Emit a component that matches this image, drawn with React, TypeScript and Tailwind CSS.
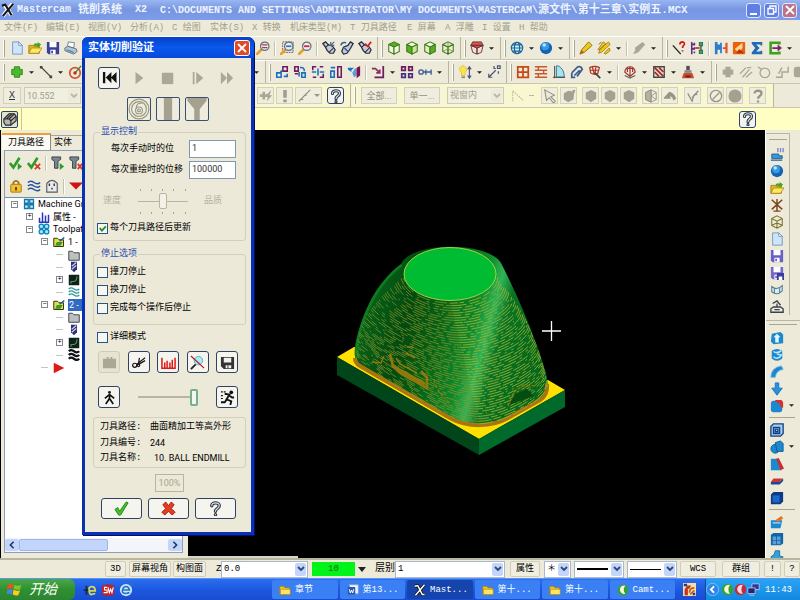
import type { ReactNode } from "react";
import clsx from "clsx";

// All glyphs are drawn on a 16x16 grid.
const cube = (top: string, left: string, right: string) => (
  <g stroke="#3c7a1c" strokeWidth="1.2" strokeLinejoin="round">
    <path d="M8 1 14 4 8 7 2 4Z" fill={top} />
    <path d="M2 4 8 7V15L2 12Z" fill={left} />
    <path d="M14 4 8 7V15L14 12Z" fill={right} />
  </g>
);

const magnifier = (inner: ReactNode) => (
  <g>
    <path d="M6 10 1 15" stroke="#e8a020" strokeWidth="3" strokeLinecap="round" />
    <circle cx="10" cy="6" r="4.8" fill="#e4eef6" stroke="#666c78" strokeWidth="1.4" />
    {inner}
  </g>
);

const flashlight = (mark: ReactNode) => (
  <g>
    <path d="M1 3 4 1 7 4 12 6 15 10 13 14 9 14 6 11 4 7Z" fill="#c6ccd6" stroke="#252b38" strokeWidth="1.4" />
    <path d="M4 7 8 4M8 13 13 8" stroke="#252b38" strokeWidth="1.2" />
    {mark}
  </g>
);

const disk = (color: string) => (
  <g>
    <path d="M1 1H15V15H3L1 13Z" fill={color} />
    <path d="M4 1H12V7H4ZM5 10H11V15H5Z" fill="#fff" />
    <path d="M6 11H8V14H6Z" fill={color} />
  </g>
);

const questionPaths = (
  <g fill="none" strokeLinecap="round">
    <path d="M4 5C4 1 12 1 12 5 12 8 8 8 8 11M8 14.5V14.6" stroke="#2c3442" strokeWidth="3.6" />
    <path d="M4 5C4 1 12 1 12 5 12 8 8 8 8 11M8 14.5V14.6" stroke="#dfe4ea" strokeWidth="1.2" />
  </g>
);

const folder = (
  <g>
    <path d="M1 3H6L8 5H14V14H1Z" fill="#f4c428" stroke="#9c7a10" />
    <path d="M2 7H15V14H2Z" fill="#fde468" stroke="#9c7a10" strokeWidth=".7" />
  </g>
);

const waves = (color: string) => (
  <path d="M1 4Q4 1 8 4T15 4M1 8Q4 5 8 8T15 8M1 12Q4 9 8 12T15 12" fill="none" stroke={color} strokeWidth="1.7" />
);

const icons: Record<string, ReactNode> = {
  new: (
    <g>
      <path d="M3 1H10L14 5V15H3Z" fill="#cfe4fa" stroke="#6a94c4" />
      <path d="M10 1V5H14Z" fill="#fff" stroke="#6a94c4" />
    </g>
  ),
  open: (
    <g>
      <path d="M1 5H6L7 6H13V14H1Z" fill="#e8b820" stroke="#a27a10" />
      <path d="M4 8H16L12 14H1Z" fill="#fde860" stroke="#a27a10" strokeWidth=".8" />
      <path d="M6 6Q7 1 11 3V1L15 4 11 8V6Q8 5 6 6Z" fill="#48a420" />
    </g>
  ),
  save: disk("#3b3f96"),
  savePurple: disk("#6a60c8"),
  saveAs: (
    <g>
      <g>{disk("#7468c8")}</g>
      <path d="M8 8H16V16H8Z" fill="#3c3ca0" />
      <path d="M10 12H14V16H10Z" fill="#fff" />
    </g>
  ),
  print: (
    <g>
      <path d="M5 1 12 2 11 8 4 6Z" fill="#fff" stroke="#68788a" />
      <path d="M1 8 4 6 14 9 15 12 11 15 1 11Z" fill="#b8c4d0" stroke="#5a6878" />
      <path d="M3 10 11 13" stroke="#3a8ac0" strokeWidth="1.4" />
    </g>
  ),
  plus: <path d="M5 2H11V5H14V11H11V14H5V11H2V5H5Z" fill="#4cb82c" stroke="#2c8018" />,
  line: (
    <g>
      <path d="M2 2 14 14" stroke="#444" strokeWidth="1.3" />
      <path d="M1 1H4V4H1ZM12 12H15V15H12Z" fill="#444" />
    </g>
  ),
  circleRed: (
    <g>
      <circle cx="8" cy="9" r="6" fill="none" stroke="#d05830" strokeWidth="2" />
      <path d="M8 9 15 1" stroke="#488030" strokeWidth="1.6" />
      <circle cx="8" cy="9" r="2" fill="#c03020" />
    </g>
  ),
  zoomRed: magnifier(<path d="M7 4.500H13M7 7.500H13" stroke="#b03838" strokeWidth="1.5" />),
  zoomWin: (
    <g>
      <path d="M3 1H15V13H3Z" fill="none" stroke="#555" strokeDasharray="2 1" />
      {magnifier(<path d="M7 6H13" stroke="#3a78b8" strokeWidth="2" />)}
    </g>
  ),
  zoomOut: magnifier(<path d="M7 6H13" stroke="#d02020" strokeWidth="2" />),
  flash1: flashlight(<path d="M10 1V5H14M10 5 14 1" fill="none" stroke="#48698e" strokeWidth="1.4" />),
  flash2: (
    <g>
      <path d="M15 3 12 1 9 5 4 7 2 12 4 15 8 14 11 10Z" fill="#c6ccd6" stroke="#252b38" strokeWidth="1.4" />
      <path d="M1 5Q2 1 7 2M5 8 9 12" fill="none" stroke="#28649c" strokeWidth="1.8" />
    </g>
  ),
  flash3: flashlight(<path d="M8 3 11 6 15 1" fill="none" stroke="#d02028" strokeWidth="2" />),
  cubeTop: cube("#58b020", "#f4f8e0", "#f4f8e0"),
  cubeFront: cube("#f4f8e0", "#58b020", "#c8e890"),
  cubeRight: cube("#f4f8e0", "#e0f0c0", "#58b020"),
  cubeWire: (
    <g>
      {cube("none", "none", "none")}
      <path d="M2 12 8 9 14 12M8 1V9" fill="none" stroke="#789838" />
    </g>
  ),
  cubeOlive: (
    <g fill="none" stroke="#77742c" strokeWidth="1.2">
      <path d="M8 1 14 4V12L8 15 2 12V4ZM2 4 8 7 14 4M8 7V15M2 12 8 9 14 12" />
    </g>
  ),
  cubeRed: (
    <g stroke="#5c3030">
      <path d="M3 1H13L15 5H1Z" fill="#e05050" />
      <path d="M1 5 8 8V15L3 13ZM15 5 8 8V15L13 13Z" fill="#f4dcd4" />
      <path d="M1 5H15L8 8Z" fill="#e05050" />
    </g>
  ),
  globe: (
    <g fill="none" stroke="#1e6696" strokeWidth="1.3">
      <circle cx="8" cy="8" r="6.500" fill="#d4ecf4" />
      <ellipse cx="8" cy="8" rx="3" ry="6.500" />
      <path d="M1.500 8H14.500M3 4.500H13M3 11.500H13" />
    </g>
  ),
  sphere: (
    <g>
      <circle cx="8" cy="8" r="7" fill="#1464b4" />
      <circle cx="7" cy="6" r="4.500" fill="#3a98e0" />
      <circle cx="6" cy="4.500" r="2" fill="#b8e4fc" />
    </g>
  ),
  crayon: (
    <g>
      <path d="M11 1 15 5 6 13 1 15 3 10Z" fill="#f0c81c" stroke="#8c6c10" />
      <path d="M3 10 6 13 1 15Z" fill="#c06020" />
    </g>
  ),
  crayons: (
    <g stroke="#8c6c10" strokeWidth=".8" fill="#f0c81c">
      <path d="M7 1 10 3 4 9 1 10ZM13 1 15 4 5 13 2 14 3 10ZM14 8 15 11 10 15 8 14Z" />
      <path d="M2 4 5 1" stroke="#333" />
    </g>
  ),
  eraser: <path d="M12 1 15 4 7 13 1 15 4 10 3 8Z" fill="#a8a694" />,
  lineQ: (
    <g fill="none">
      <path d="M1 5 10 15" stroke="#222" strokeWidth="1.600" />
      <path d="M9 4Q9 1 12 1 15 2 14 4 12 6 12 8M12 10.500V12" stroke="#d01818" strokeWidth="2" />
    </g>
  ),
  network: (
    <g fill="none" strokeWidth="1.800">
      <path d="M2 1V15M5 2V5M5 7V10M5 12V14M2 4H5M2 9H5" stroke="#5a3080" />
      <path d="M11 2H14V5H11ZM11 11H14V14H11ZM12.500 5V11" stroke="#287858" />
      <path d="M6 8H11" stroke="#c02020" />
    </g>
  ),
  hsplit: (
    <g>
      <path d="M1 1H4V4H7V2H9V14H7V10H4V15H1Z" fill="#2c7cd0" />
      <path d="M10 7H13V2H15.500V14H13V9H10Z" fill="#e05030" />
    </g>
  ),
  orange: (
    <g>
      <rect x="1" y="1" width="14" height="14" rx="1" fill="#e86010" />
      <path d="M3 9 12 2V8L8 13Z" fill="#fcd890" />
      <path d="M8 9 14 14H5Z" fill="#c02c08" />
    </g>
  ),
  sigma: <path d="M2 1H14V5H12V4H7L11 8 7 12H12V11H14V15H2V13L6 8 2 3Z" fill="#2068b8" />,
  greenBox: (
    <g>
      <path d="M13 4V2H3V14H13V12" fill="none" stroke="#3ca020" strokeWidth="3" />
      <path d="M5 7H11V4L16 8 11 12V9H5Z" fill="#7c2470" />
    </g>
  ),
  xf1: (
    <g fill="none" strokeWidth="1.800">
      <path d="M9 2H14V7H9Z" stroke="#701c60" />
      <path d="M2 9H7V14H2ZM10 13H14V10" stroke="#1c70c0" />
      <path d="M6 8 9 6" stroke="#1c70c0" />
    </g>
  ),
  xf2: (
    <g fill="none" strokeWidth="1.800">
      <path d="M2 2H6V7H2ZM2 10H6" stroke="#701c60" />
      <path d="M10 9H14V14H10ZM8 3Q13 2 13 7M7 8V13" stroke="#1c70c0" />
    </g>
  ),
  xf3: (
    <g fill="none" strokeWidth="1.800">
      <path d="M6 2H2V6M2 14H6M10 2H14M14 10V14H10" stroke="#701c60" />
      <path d="M8 4V12M1 8H6M10 8H15" stroke="#1c70c0" />
    </g>
  ),
  xf4: (
    <g fill="none" strokeWidth="1.800">
      <path d="M10 2H14V14H10Z" stroke="#701c60" />
      <path d="M2 7H6V14H2ZM2 3H7" stroke="#1c70c0" />
    </g>
  ),
  xf5: (
    <g>
      <path d="M1 3H8L5 6V8L1 5Z" fill="#1c70c0" />
      <path d="M6 9 9 4H11V12L8 14Z" fill="#5c9cd8" />
      <path d="M11 3 15 1V12L11 15Z" fill="#7c1450" />
    </g>
  ),
  xf6: (
    <g fill="none" strokeWidth="2">
      <path d="M14 1V14H4" stroke="#701c60" />
      <path d="M1 4H5L10 9M10 5V9H6" stroke="#8c2c60" />
    </g>
  ),
  xf7: (
    <g fill="none" strokeWidth="2">
      <path d="M2 2H6V6H2ZM10 2H14V6H10Z" stroke="#701c60" />
      <path d="M2 10H6V14H2ZM10 10H14V14H10Z" stroke="#4c3080" />
    </g>
  ),
  xf8: (
    <g fill="none" stroke="#385c98" strokeWidth="1.500">
      <circle cx="3.500" cy="8" r="2.500" />
      <path d="M6 8H15M9 5V11M15 5V11" />
    </g>
  ),
  bulb: (
    <g>
      <path d="M5 1Q1 2 2 6L4 9V12H8V9Q11 6 9 3 7 0 5 1Z" fill="#fce448" stroke="#e0c040" />
      <path d="M4 13H8V15H4Z" fill="#888" />
      <path d="M13 3V14M11 5 13 2 15 5M11 12 13 15 15 12" fill="none" stroke="#505078" strokeWidth="1.300" />
    </g>
  ),
  dimension: (
    <g fill="none" stroke="#4c5478" strokeWidth="1.400">
      <path d="M2 14 10 6M2 10V14H6" />
      <path d="M8 1V4H10M12 1H15V4H12ZM13 7V10" />
    </g>
  ),
  grid: <path d="M2 2H14V14H2ZM8 2V14M2 8H14" fill="none" stroke="#c84818" strokeWidth="2" />,
  bars: <path d="M1 2H15M1 6H15M1 10H15M1 14H15M5 2V6M11 6V10M5 10V14" fill="none" stroke="#c85830" strokeWidth="1.600" />,
  sail: (
    <g>
      <path d="M5 1H7Q14 4 14 14H5Z" fill="#a8e4ec" stroke="#286c98" />
      <path d="M3 1V15M1 14H15" stroke="#333" />
    </g>
  ),
  clip: <path d="M2 9 9 2Q13 1 14 5L8 13M5 12 11 6M2 9V14H6" fill="none" stroke="#3c5c94" strokeWidth="2" />,
  redMesh: (
    <g fill="none" stroke="#b03428" strokeWidth="1.400">
      <path d="M2 3Q8 0 13 3L11 10Q7 12 3 9ZM5 2 7 10M9 2 8 10M2 6H12" />
      <path d="M8 9 14 15" stroke="#444" strokeWidth="2" />
    </g>
  ),
  dome: (
    <g fill="none" stroke="#a03830" strokeWidth="1.400">
      <path d="M2 8Q3 2 8 2T14 8L8 13ZM5 8V4H11V8M8 2V13" />
      <path d="M2 12 8 15 14 12" stroke="#666" />
    </g>
  ),
  hatch: (
    <g>
      <path d="M2 2H14V14H2Z" fill="#efe0d8" stroke="#444" strokeWidth="1.500" />
      <path d="M3 3 13 13M3 8 8 13M8 3 13 8" stroke="#a02820" strokeWidth="2" />
    </g>
  ),
  tool: (
    <g>
      <path d="M6 1H10V6H6Z" fill="#505050" />
      <path d="M4 6H12V9H4Z" fill="#888" />
      <path d="M3 9H13L15 15H1Z" fill="#d84828" />
      <path d="M5 12H11V14H5Z" fill="#333" />
    </g>
  ),
  gPlus: <path d="M5 2H11V5H14V11H11V14H5V11H2V5H5Z" fill="#aaa894" />,
  gLines: <path d="M1 10 8 3M4 14 12 5M8 14 15 8M9 3H14" stroke="#aaa894" strokeWidth="1.500" fill="none" />,
  gCircle: (
    <g fill="none" stroke="#aaa894" strokeWidth="1.500">
      <circle cx="9" cy="9" r="5.500" />
      <path d="M1 2 5 5" />
    </g>
  ),
  gReturn: <path d="M15 2V8H8V14H1M4 10 8 3" fill="none" stroke="#aaa894" strokeWidth="1.700" />,
  gDot: <rect x="1" y="2" width="13" height="12" rx="3" fill="#aaa894" />,
  gBolt: <path d="M1 6H4V3H7V6H9L14 1 12 7H15L9 14 10 9H7V12H4V9H1Z" fill="#aaa894" />,
  gBang: <path d="M6 1H10V10H6ZM6 12H10V15H6Z" fill="#a09e8a" />,
  gSlash: <path d="M1 14 14 1M3 12H6M9 5V8" fill="none" stroke="#918f7d" strokeWidth="1.300" />,
  gAngle: <path d="M2 14V2L14 13" fill="none" stroke="#bcb89c" strokeWidth="1.200" strokeDasharray="2 1" />,
  cursor: <path d="M2 1 13 7 9 9 14 14 12 16 7 10 4 13Z" fill="#eceadb" stroke="#8f8d7b" strokeWidth="1.200" />,
  gHex: <path d="M8 1 14 4V11L8 15 2 11V4Z" fill="#a4a28e" />,
  gHexDot: (
    <g fill="#a4a28e">
      <path d="M7 2 14 3 13 12 7 15 2 12V5Z" />
      <path d="M12 1H15V4H12Z" />
    </g>
  ),
  gHalf: (
    <g fill="none" stroke="#918f7d">
      <path d="M8 1 14 4V12L8 15 2 12V4Z" />
      <path d="M8 1V15M8 8 14 4M8 8 14 12M2 4 8 8 2 12" />
      <path d="M8 1 2 4V12L8 15Z" fill="#b5b3a0" />
    </g>
  ),
  gArc: <path d="M1 10 7 3Q13 4 15 11L12 13Q11 9 8 8L9 11H1Z" fill="#98967f" />,
  gV: <path d="M2 5 7 14 9 7 13 6M7 10 14 2" fill="none" stroke="#8f8d7b" strokeWidth="1.400" />,
  gNo: (
    <g fill="none" stroke="#98967f" strokeWidth="1.500">
      <circle cx="8" cy="8" r="6.500" />
      <path d="M4 12 12 4" />
    </g>
  ),
  gBall: <circle cx="8" cy="8" r="7.500" fill="#a4a28e" />,
  gQ: <path d="M4 5C4 1 12 1 12 5 12 8 8 8 8 11M8 13V15.500" fill="none" stroke="#98967f" strokeWidth="2.600" />,
  question: questionPaths,
  solidBox: (
    <g fill="none" stroke="#2a2a2a" strokeWidth="1.300" strokeLinejoin="round">
      <path d="M1 8 7 2H13L15 5V10L9 15H3L1 12Z" fill="#b8b8b0" />
      <path d="M1 8H7L9 10V15M7 8 13 2M9 10 15 5M4 8 10 2" />
    </g>
  ),
  checkGo: (
    <g>
      <path d="M1 8 5 13 12 2" fill="none" stroke="#2e9c28" strokeWidth="3" />
      <path d="M10 8 15 12 10 16Z" fill="#2e9c28" />
    </g>
  ),
  checkX: (
    <g fill="none">
      <path d="M1 8 5 13 12 2" stroke="#2e9c28" strokeWidth="3" />
      <path d="M9 9 15 15M15 9 9 15" stroke="#d83820" strokeWidth="2" />
    </g>
  ),
  toolGo: (
    <g>
      <path d="M1 1H11V4L8 6V14H4V6L1 4Z" fill="#78868e" stroke="#333c44" />
      <path d="M10 8 15 12 10 16Z" fill="#2e9c28" />
    </g>
  ),
  toolX: (
    <g>
      <path d="M1 1H11V4L8 6V14H4V6L1 4Z" fill="#78868e" stroke="#333c44" />
      <path d="M10 9 15 15M15 9 10 15" stroke="#d83820" strokeWidth="2" />
    </g>
  ),
  lock: (
    <g>
      <path d="M5 7V4Q8 0 11 4V7" fill="none" stroke="#9c7410" strokeWidth="2" />
      <rect x="2" y="6" width="12" height="9" rx="1" fill="#f4c030" stroke="#9c7410" />
      <path d="M7 9H9V13H7Z" fill="#5c3c08" />
    </g>
  ),
  waves: waves("#2450a0"),
  wavesTeal: waves("#289898"),
  wavesBlack: (
    <path d="M1 3Q4 0 8 3T15 3M1 8Q4 5 8 8T15 8M1 13Q4 10 8 13T15 13" fill="none" stroke="#101418" strokeWidth="3" />
  ),
  ghost: (
    <g>
      <path d="M2 15V5Q8-2 14 5V15Z" fill="#e8eaec" stroke="#555c68" strokeWidth="1.300" />
      <path d="M5 5V8M10.500 5V8M8 10V12" stroke="#333" strokeWidth="1.600" />
    </g>
  ),
  redDown: <path d="M0 4H16L8 12Z" fill="#cc1414" />,
  redRight: <path d="M1 1 15 8 1 15Z" fill="#e01818" />,
  machine: <path d="M2 2H7V7H2ZM9 2H14V7H9ZM2 9H7V14H2ZM9 9H14V14H9Z" fill="#c0f0fc" stroke="#1874a8" strokeWidth="1.700" />,
  props: <path d="M2 14V9M6 14V2M10 14V6M14 14V5M1 15H15" stroke="#2838b8" strokeWidth="2" />,
  toolpaths: (
    <g fill="#9ce8f8" stroke="#1080b8" strokeWidth="1.600">
      <circle cx="4.500" cy="4.500" r="3" />
      <circle cx="11.500" cy="4.500" r="3" />
      <circle cx="4.500" cy="11.500" r="3" />
      <circle cx="11.500" cy="11.500" r="3" />
    </g>
  ),
  folderTool: (
    <g>
      <path d="M1 3H6L8 5H14V14H1Z" fill="#e4dc48" stroke="#333408" strokeWidth="1.300" />
      <path d="M5 8H13L10 13H3Z" fill="#3a9830" />
      <path d="M9 7 15 2" stroke="#205890" strokeWidth="2" />
    </g>
  ),
  folderGray: <path d="M1 3H6L8 5H15V15H1Z" fill="#bcc0c0" stroke="#44484c" strokeWidth="1.300" />,
  endmill: (
    <g>
      <path d="M4 1H12V11L8 15 4 11Z" fill="#303078" />
      <path d="M5 7 11 2M5 11 11 6" stroke="#d0d0ec" strokeWidth="1.500" />
    </g>
  ),
  geometry: (
    <g>
      <rect x="1" y="1" width="14" height="14" fill="#10201c" />
      <path d="M4 13V10H8Q12 9 12 3" fill="none" stroke="#4c9c40" strokeWidth="1.500" />
    </g>
  ),
  planes: (
    <g>
      <path d="M2 8H10V10H14V13H2Z" fill="#3c98dc" stroke="#205c90" />
      <path d="M9 1V6M12 1V6M15 1V6" stroke="#8088c8" strokeWidth="1.600" />
      <path d="M1 15H14" stroke="#205c90" strokeWidth="1.400" />
    </g>
  ),
  axes: <path d="M8 1V15M2 2 14 13M14 2 2 13M4 15H12" fill="none" stroke="#7c4420" strokeWidth="1.700" />,
  surf: <path d="M2 4Q8 9 14 3V9Q8 15 2 10ZM5 6V11M11 6V11" fill="#d4ecf4" stroke="#587890" strokeWidth="1.200" />,
  mill: (
    <g fill="none" stroke="#38404c" strokeWidth="1.500">
      <path d="M1 14V10L4 8H12L15 10V14ZM8 8V4M5 11H11M3 4 8 1 12 6" />
    </g>
  ),
  extrude: (
    <g>
      <path d="M2 3 12 1 15 4V14L4 15 1 12Z" fill="#1c88d0" />
      <path d="M8 3 12 7H10V13H6V7H4Z" fill="#e4f8ff" />
    </g>
  ),
  revolve: (
    <g>
      <path d="M2 3Q8-1 14 3V12Q8 17 2 12Z" fill="#1c88d0" />
      <path d="M4 4Q8 7 13 3M4 10Q9 14 13 8L8 7" fill="none" stroke="#bce8fc" strokeWidth="1.700" />
    </g>
  ),
  sweep: <path d="M1 14Q1 3 13 1L15 5Q7 6 6 14Z" fill="#1c88d0" stroke="#64b8ec" />,
  loft: <path d="M6 1H10V7H14L8 15 2 7H6Z" fill="#2890dc" stroke="#1474b8" />,
  fillet: (
    <g>
      <rect x="1" y="2" width="13" height="13" rx="3" fill="#1c88d0" />
      <path d="M6 1H12Q15 1 15 5V10L12 9Q12 4 6 3Z" fill="#d83030" />
    </g>
  ),
  shell: (
    <g fill="none" stroke="#143c80" strokeWidth="1.500">
      <path d="M1 4 4 1H15V12L12 15H1Z" fill="#a0d4f4" />
      <path d="M4 5H11V12H4ZM6 7H9V10H6Z" />
    </g>
  ),
  bool: (
    <g fill="#1c88d0" stroke="#0c5898">
      <circle cx="6" cy="10" r="5" />
      <path d="M6 3 12 1 15 4V13H8Z" />
    </g>
  ),
  draft: (
    <g>
      <path d="M1 2H8L13 15H1Z" fill="#1c88d0" />
      <path d="M7 2 10 1 16 13 12 15Z" fill="#c83030" />
    </g>
  ),
  trimSolid: (
    <g>
      <path d="M4 5H15L11 9H1Z" fill="#c83838" />
      <path d="M1 9H11L15 5V8L11 12H1Z" fill="#184c90" />
    </g>
  ),
  block: (
    <g>
      <path d="M1 4 4 1H15V12L12 15H1Z" fill="#0c3c84" />
      <path d="M3 5H11V13H3Z" fill="#1c68c8" />
    </g>
  ),
  openSolid: (
    <g>
      <path d="M1 6H14L12 15H1Z" fill="#1c88d0" />
      <path d="M6 6 13 1 15 4 9 8Z" fill="#e87020" />
      <path d="M3 9H12" stroke="#a0dcf8" strokeWidth="1.500" />
    </g>
  ),
  grid3d: (
    <g>
      <path d="M1 3 4 1H15V13L12 15H1Z" fill="#1464a8" />
      <path d="M3 5H7V9H3ZM8 5H12V9H8ZM3 10H7V14H3ZM8 10H12V14H8Z" fill="#58a0d8" />
    </g>
  ),
  arrowSolid: <path d="M1 9 5 6 6 2H11V8L15 9 11 14H5Z" fill="#30a0e0" stroke="#206898" />,
  xlogo: (
    <g fill="none">
      <path d="M4 2 12 14M13 1 2 15" stroke="#fff" strokeWidth="4.500" />
      <path d="M1 3 5 2 12 14M14 1 2 15" stroke="#151515" strokeWidth="2.400" />
    </g>
  ),
  xlogoWhite: (
    <g fill="none">
      <path d="M1 3 5 2 11 14H14M14 1 2 15" stroke="#111" strokeWidth="4" />
      <path d="M1 3 5 2 11 14H14M14 1 2 15" stroke="#fff" strokeWidth="2" />
    </g>
  ),
  folder,
  word: (
    <g>
      <path d="M3 1H15V13H6Z" fill="#f0f4fc" stroke="#88a0c8" />
      <rect x="1" y="4" width="10" height="10" fill="#2858b0" />
      <path d="M3 7 4.500 12 6 8 7.500 12 9 7" fill="none" stroke="#fff" strokeWidth="1.300" />
    </g>
  ),
  camtasia: (
    <g>
      <circle cx="8" cy="8" r="7" fill="#38a030" />
      <path d="M11 2Q3 2 4 9 6 14 11 13 7 8 11 2Z" fill="#f8fcd8" />
    </g>
  ),
  trayRed: (
    <g>
      <circle cx="8" cy="8" r="7" fill="#c82838" />
      <path d="M11 2Q3 2 4 9 6 14 11 13 7 8 11 2Z" fill="#fcdce0" />
    </g>
  ),
  monitors: (
    <g stroke="#c0ccf4">
      <path d="M6 1H15V8H6Z" fill="#303890" />
      <path d="M1 6H10V13H1Z" fill="#20286c" />
      <path d="M3 15H9" />
    </g>
  ),
  palette: (
    <g>
      <rect width="16" height="16" fill="#f0e0a8" />
      <path d="M2 15V8L5 3H10L8 7H6V15Z" fill="#c83020" />
      <path d="M1 1H5V4H1ZM12 12H15V15H12Z" fill="#20389c" />
      <path d="M8 12Q8 6 14 6M9 14 14 9" fill="none" stroke="#c85820" strokeWidth="2" />
    </g>
  ),
  ieDark: (
    <g fill="none" stroke="#d8d850" strokeWidth="2">
      <path d="M7 9H14Q14 4 10 4T7 9 10 13L14 12" />
      <path d="M1 8H6M4 3V13" stroke="#182838" />
    </g>
  ),
  solidworks: (
    <g>
      <path d="M1 3 8 1 15 3V13L8 15 1 13Z" fill="#c02028" />
      <path d="M7 5H4V8H7V11H3M8 5 9.500 11 11 7 12.500 11 14 5" fill="none" stroke="#fff" strokeWidth="1.300" />
    </g>
  ),
  ie: (
    <g fill="none">
      <circle cx="8" cy="8" r="7" fill="#c8e8fc" />
      <path d="M5 8H12Q11 4 8 4T4 8 8 12L12 11M12 2 15 1 14 4" stroke="#2870c0" strokeWidth="1.800" />
    </g>
  ),
  chevronLeft: (
    <g fill="none">
      <circle cx="8" cy="8" r="7.500" fill="#2c84e8" stroke="#90c8fc" />
      <path d="M10 4 6 8 10 12" stroke="#fff" strokeWidth="2.200" />
    </g>
  ),
  rewind: <path d="M1 2H3.500V14H1ZM4 8 10 2V14ZM9.500 8 15.500 2V14Z" fill="#111" />,
  play: <path d="M4 1 13 8 4 15Z" fill="#aba995" />,
  stop: <path d="M1 2H14V15H1Z" fill="#aba995" />,
  step: <path d="M2 1H4V15H2ZM6 1 14 8 6 15Z" fill="#aba995" />,
  forward: <path d="M1 1 8 8 1 15ZM8 1 15 8 8 15Z" fill="#aba995" />,
  target: (
    <g fill="none" stroke="#98967f" strokeWidth=".8">
      <circle cx="8" cy="8" r="7.200" />
      <circle cx="8" cy="8" r="5.400" />
      <circle cx="8" cy="9" r="2.500" />
      <circle cx="8" cy="9" r="1" />
      <path d="M6 8Q6 3 10 4" />
    </g>
  ),
  stockBar: <path d="M5 0H11V16H5Z" fill="#a4a28e" />,
  funnel: <path d="M1 0H15V2L10 8V16H6V8L1 2Z" fill="#a4a28e" />,
  camera: <path d="M1 4H5V2H7V4H9V2H11V4H15V14H1Z" fill="#aaa894" />,
  caliper: (
    <g fill="none" stroke="#161616" strokeWidth="1.300">
      <path d="M15 3 6 10M15 6 8 10M9 3 8 9" />
      <circle cx="4" cy="11" r="2.200" />
      <circle cx="8" cy="11" r="1.300" />
    </g>
  ),
  chart: <path d="M1 3V14H15V3M4 14V8M6.500 14V6M9.500 14V8M12 14V5" fill="none" stroke="#e01818" strokeWidth="1.600" />,
  noZoom: (
    <g fill="none">
      <circle cx="9" cy="6" r="4.500" fill="#a8eef0" stroke="#58b0b4" />
      <path d="M6 10 1 15" stroke="#222" strokeWidth="2" />
      <path d="M1 1 15 14" stroke="#c01830" strokeWidth="1.400" />
    </g>
  ),
  floppy: (
    <g>
      <path d="M1 2H15V15H4L1 12Z" fill="#333" />
      <path d="M4 3H12V8H4ZM6 11H12V14H6Z" fill="#eef0f2" />
      <path d="M8 11H9V14H8Z" fill="#333" />
    </g>
  ),
  walk: (
    <g fill="none" stroke="#111" strokeWidth="1.800">
      <circle cx="8" cy="2.500" r="1.500" fill="#111" stroke="none" />
      <path d="M8 4V9L4 15M8 9 12 15M3 9 8 5 13 9" />
    </g>
  ),
  run: (
    <g fill="none" stroke="#111" strokeWidth="2">
      <circle cx="12" cy="2.500" r="2" fill="#111" stroke="none" />
      <path d="M5 4 10 5 7 10 12 12 11 16M8 9 5 13H1M10 6 13 8H15" />
      <path d="M1 2H6M1 6H4M1 9H4" strokeWidth="1.200" strokeDasharray="2 1" />
    </g>
  ),
  ok: <path d="M1 9 4 7 6 11 13 1 15 2 7 15H5Z" fill="#40c828" stroke="#208010" />,
  cancel: <path d="M2 4 5 1 8 5 11 1 14 4 11 8 15 12 12 15 8 11 4 15 1 12 5 8Z" fill="#e83c20" stroke="#a01c0c" />,
};

function Icon({ name, className = "size-[14px]" }: { name: string; className?: string }) {
  return (
    <svg viewBox="0 0 16 16" className={clsx("shrink-0", className)} aria-hidden="true">
      {icons[name]}
    </svg>
  );
}

// "v" is a drop-down arrow, "|" a separator, "][" the edge between two docked bars.
function Strip({ items }: { items: string }) {
  return (
    <div className="flex h-full items-center">
      {items.split(" ").map((item, i) => {
        if (item === "v")
          return (
            <button key={i} aria-label="更多" className="flex h-4 w-[11px] shrink-0 items-center justify-center">
              <svg viewBox="0 0 6 3" className="h-[3px] w-[5px]">
                <path d="M0 0H6L3 3Z" fill="#222" />
              </svg>
            </button>
          );
        if (item === "|") return <i key={i} className="mx-[2px] h-[15px] w-[2px] shrink-0 border-l border-[#c5c2ae] bg-white" />;
        if (item === "][")
          return (
            <i key={i} className="flex h-full w-[11px] shrink-0 items-center gap-[3px] pl-[3px]">
              <i className="h-full w-px bg-[#b9b69f]" />
              <i className="h-[17px] w-[2px] border-r border-[#a9a68f] bg-white" />
            </i>
          );
        return (
          <button key={i} aria-label={item} className="flex h-[18px] w-[18px] shrink-0 items-center justify-center">
            <Icon name={item} />
          </button>
        );
      })}
    </div>
  );
}

function Toolbar({ left, right, shift }: { left: string; right: string; shift?: boolean }) {
  return (
    <div className="flex h-6 shrink-0 items-center overflow-hidden border-b border-[#c9c6b2] border-t border-t-white bg-[#edead9]">
      <i className="ml-[3px] mr-[3px] h-[17px] w-[2px] shrink-0 border-r border-[#a9a68f] bg-white" />
      <div className={clsx("h-full shrink-0", shift ? "w-[243px]" : "w-[246px]")}>
        <Strip items={left} />
      </div>
      <Strip items={right} />
    </div>
  );
}

const menus = [
  ["文件(F)", "w-[42px]"],
  ["编辑(E)", "w-[42px]"],
  ["视图(V)", "w-[42px]"],
  ["分析(A)", "w-[42px]"],
  ["C 绘图", "w-[38px]"],
  ["实体(S)", "w-[42px]"],
  ["X 转换", "w-[38px]"],
  ["机床类型(M)", "w-[60px]"],
  ["T 刀具路径", "w-[57px]"],
  ["E 屏幕", "w-[38px]"],
  ["A 浮雕", "w-[37px]"],
  ["I 设置", "w-[37px]"],
  ["H 帮助", "w-[38px]"],
];

function TitleBar() {
  const button = "flex size-[15px] items-center justify-center rounded-[3px] border border-[#dfe8ff]";
  return (
    <header className="flex h-5 shrink-0 items-center bg-gradient-to-b from-[#98b6f2] via-[#7795e0] to-[#7d9ded] pl-[1px] pr-[3px] text-[10px] font-bold text-[#eef4ff]">
      <Icon name="xlogo" />
      <h1 className="ml-[2px] flex flex-1 items-center gap-[7px] whitespace-pre">
        <span>Mastercam</span>
        <span className="text-[11px]">铣削系统</span>
        <span className="ml-[6px]">X2</span>
        <span className="ml-[6px]">
          C:\DOCUMENTS AND SETTINGS\ADMINISTRATOR\MY DOCUMENTS\MASTERCAM\<span className="text-[11px]">源文件\第十三章\实例五.MCX</span>
        </span>
      </h1>
      <div className="flex gap-[3px]">
        <button aria-label="最小化" className={clsx(button, "bg-[#5f7fe4]")}>
          <i className="mt-[7px] h-[2px] w-[7px] bg-white" />
        </button>
        <button aria-label="还原" className={clsx(button, "bg-[#5f7fe4]")}>
          <svg viewBox="0 0 10 10" className="size-[10px]">
            <path d="M3 3V1H9V7H7M1 3.500H6.500V9H1Z" fill="none" stroke="#fff" strokeWidth="1.400" />
          </svg>
        </button>
        <button aria-label="关闭" className={clsx(button, "bg-[#bd7488]")}>
          <svg viewBox="0 0 10 10" className="size-[10px]">
            <path d="M1 1 9 9M9 1 1 9" stroke="#fff" strokeWidth="1.800" />
          </svg>
        </button>
      </div>
    </header>
  );
}

function Chevron({ muted }: { muted?: boolean }) {
  return (
    <i
      className={clsx(
        "pointer-events-none absolute inset-y-[1px] right-[1px] flex w-[11px] items-center justify-center rounded-[2px]",
        muted ? "bg-[#eceadb]" : "bg-[#c3d5fa]",
      )}
    >
      <svg viewBox="0 0 8 6" className="h-[6px] w-[8px]">
        <path d="M1 1 4 4 7 1" fill="none" stroke={muted ? "#bbb8a4" : "#2c4878"} strokeWidth="1.800" />
      </svg>
    </i>
  );
}

function Combo({ label, value, className, line, muted }: { label: string; value: string; className: string; line?: string; muted?: boolean }) {
  return (
    <div className={clsx("relative flex h-[17px] items-center border", muted ? "border-[#cdcab6] bg-[#f1efdf]" : "border-[#a9b8cc] bg-white", className)}>
      <select aria-label={label} disabled={muted} className={clsx("h-full w-full appearance-none bg-transparent pl-[2px] outline-none", muted && "text-[#a3a08b]")}>
        <option>{value}</option>
      </select>
      {line && <i className={clsx("pointer-events-none absolute left-[2px] right-[15px]", line)} />}
      <Chevron muted={muted} />
    </div>
  );
}

function SelectionBar() {
  const flat = "flex h-[17px] shrink-0 items-center justify-center whitespace-nowrap border border-[#d3d0bc] bg-[#efedde]";
  const filter = "w-[36px] font-[Roboto,'Noto_Sans_CJK_SC'] text-[#8f8d7b]";
  const cell = (name: string) => (
    <button key={name} aria-label={name} className={clsx(flat, "w-[17px]")}>
      <Icon name={name} />
    </button>
  );
  return (
    <div className="flex h-6 shrink-0 items-center overflow-hidden border-b border-[#c9c6b2] bg-[#edead9]">
      <div className="flex w-[254px] shrink-0 items-center gap-[3px] pl-[3px]">
        <button className={clsx(flat, "w-[18px] text-[10px] text-[#333] underline")}>X</button>
        <Combo label="X 坐标" value="10.552" muted className="w-[57px] font-[Roboto]" />
      </div>
      <div className="flex h-full shrink-0 items-center border-r border-[#b9b69f] bg-[#f9f7d2] pl-[3px] pr-[7px]">
        <div className="flex gap-[2px]">
          {["gBolt", "gBang"].map(cell)}
          <button aria-label="gSlash" className={clsx(flat, "w-[27px] gap-[2px]")}>
            <Icon name="gSlash" />
            <svg viewBox="0 0 6 3" className="h-[3px] w-[6px]">
              <path d="M0 0H6L3 3Z" fill="#9a9884" />
            </svg>
          </button>
          <button aria-label="帮助" className="ml-[3px] flex size-[17px] items-center justify-center rounded-[3px] border border-[#2c4464] bg-[#f3f4f2]">
            <Icon name="question" />
          </button>
        </div>
        <i className="ml-[6px] flex h-full items-center gap-[3px]">
          <i className="h-full w-px bg-[#b9b69f]" />
          <i className="h-[17px] w-[2px] border-r border-[#a9a68f] bg-white" />
        </i>
        <button className={clsx(flat, filter, "ml-[5px]")}>全部...</button>
        <button className={clsx(flat, filter, "ml-[7px]")}>单一...</button>
        <Combo label="选择范围" value="视窗内" muted className="ml-[7px] w-[57px]" />
        <div className="ml-[7px] flex w-[27px] items-center gap-1">
          <Icon name="gAngle" />
          <i className="h-px w-[5px] bg-[#bcb89c]" />
        </div>
        <div className="ml-[3px] flex gap-[2px]">{["cursor", "gHexDot"].map(cell)}</div>
        <div className="ml-[5px] flex gap-[2px]">
          {["a", "b", "c"].map((k) => (
            <button key={k} aria-label="选择实体" className={clsx(flat, "w-[17px]")}>
              <Icon name="gHex" />
            </button>
          ))}
        </div>
        <div className="ml-[5px] flex gap-[2px]">{["gHalf", "gArc"].map(cell)}</div>
        <div className="ml-[6px]">{cell("gV")}</div>
        <div className="ml-[6px] flex gap-[2px]">{["gNo", "gBall"].map(cell)}</div>
        <div className="ml-[6px]">{cell("gQ")}</div>
      </div>
    </div>
  );
}

const tree = [
  { depth: 0, box: "−", icon: "machine", text: "Machine Gr" },
  { depth: 1, box: "+", icon: "props", text: "属性 -" },
  { depth: 1, box: "−", icon: "toolpaths", text: "Toolpat" },
  { depth: 2, box: "−", icon: "folderTool", text: "1 -" },
  { depth: 3, icon: "folderGray" },
  { depth: 3, icon: "endmill" },
  { depth: 3, box: "+", icon: "geometry" },
  { depth: 3, icon: "wavesTeal" },
  { depth: 2, box: "−", icon: "folderTool", text: "2 -", selected: true },
  { depth: 3, icon: "folderGray" },
  { depth: 3, icon: "endmill" },
  { depth: 3, box: "+", icon: "geometry" },
  { depth: 3, icon: "wavesBlack" },
  { depth: 2, icon: "redRight" },
];
const indent = ["pl-[6px]", "pl-[21px]", "pl-[36px]", "pl-[51px]"];

function OperationsPanel() {
  return (
    <aside className="flex w-[188px] shrink-0 flex-col border-l border-black bg-[#edead9] pb-[5px] pt-[3px]">
      <div className="flex h-[17px] items-end pl-[1px]">
        <button className="h-full w-[49px] border-r border-t-2 border-r-[#8c8a78] border-t-[#f0a030] bg-[#fbfaf4]">刀具路径</button>
        <button className="h-[15px] w-[60px] border-t border-[#a9a68f] pl-[3px] text-left">实体</button>
      </div>
      <div className="ml-[3px] mr-[5px] flex min-h-0 flex-1 flex-col border border-[#8ea0b8]">
        <div className="flex h-6 shrink-0 items-center pl-[2px]">
          <Strip items="checkGo checkX | toolGo toolX" />
        </div>
        <div className="flex h-[23px] shrink-0 items-center border-b border-[#6f8db0] pl-[2px]">
          <Strip items="lock waves ghost | redDown" />
        </div>
        <div className="min-h-0 flex-1 overflow-hidden bg-white">
          <ul className="grid h-[176px] w-[78px] auto-rows-fr overflow-hidden whitespace-nowrap">
            {tree.map((node, i) => (
              <li key={i} className={clsx("flex min-h-0 items-center gap-[3px]", indent[node.depth])}>
                {node.box ? (
                  <span className="flex size-[7px] shrink-0 items-center justify-center border border-[#808890] bg-white text-[7px] leading-none">{node.box}</span>
                ) : (
                  <i className="h-px w-[7px] shrink-0 bg-[#c4c4c4]" />
                )}
                <Icon name={node.icon} className="ml-[2px] size-[12px]" />
                {node.text && (
                  <span className={clsx("font-[Roboto,'Noto_Sans_CJK_SC'] leading-[12px]", node.selected && "flex-1 bg-[#316ac5] pl-px text-white")}>{node.text}</span>
                )}
              </li>
            ))}
          </ul>
        </div>
        <div className="flex h-[14px] shrink-0 items-center justify-between bg-[#f4f5fb]">
          {["M7 1 3 5 7 9", "M3 1 7 5 3 9"].map((d, i) => (
            <button key={d} aria-label={i ? "向右" : "向左"} className={clsx("flex h-[12px] w-[14px] items-center justify-center rounded-[2px] bg-[#c3d5fa]", i && "order-3")}>
              <svg viewBox="0 0 10 10" className="size-[8px]">
                <path d={d} fill="none" stroke="#203860" strokeWidth="2" />
              </svg>
            </button>
          ))}
          <i className="order-2 mr-auto h-[12px] w-[89px] rounded-[2px] border border-[#9cb6ec] bg-[#c3d5fa]" />
        </div>
      </div>
    </aside>
  );
}

// Horizontal cutter passes, interpolated between the top rim and the foot of the part.
const rim = [404, 276, 408, 292, 425, 301, 450, 302, 478, 302, 497, 290, 497, 276];
const foot = [356, 358, 380, 376, 445, 424, 480, 425, 505, 424, 545, 402, 548, 386];
const bulge = [-14, 0, -12, 0, -4, 0, 0, 0, 4, 0, 8, 0, 9, 0];

function pass(t: number) {
  const p = rim.map((v, i) => (v + (foot[i] - v) * t + bulge[i] * Math.sin(Math.PI * t)).toFixed(1));
  return {
    left: `M${p[6]} ${p[7]}C${p[4]} ${p[5]} ${p[2]} ${p[3]} ${p[0]} ${p[1]}`,
    right: `M${p[6]} ${p[7]}C${p.slice(8, 14).join(" ")}`,
  };
}

function noise(n: number) {
  const x = Math.sin(n * 127.1) * 43758.5;
  return x - Math.floor(x);
}

// Alternating dash and gap lengths; both sides start from the front edge of the part.
function dashes(seed: number, dash: number, gap: number, growth: number) {
  return Array.from({ length: 24 }, (_, k) => (k % 2 ? 1 + noise(seed + k) * (gap + k * growth) : 1 + noise(seed + k) * dash).toFixed(1)).join(" ");
}

const outline =
  "M401 264C380 280 366 303 357 337C354 350 353 360 360 366L450 418C468 428 492 427 508 418L540 400C549 394 549 382 545 370C538 345 520 300 502 265C492 241 411 241 401 264Z";

function Viewport() {
  const passes = Array.from({ length: 50 }, (_, i) => (i + 0.5) / 50);
  return (
    <main className="min-w-0 flex-1 bg-black">
      <svg viewBox="188 130 577 428" className="h-full w-full" role="img" aria-label="实体切削模型">
        <defs>
          <linearGradient id="body" x1="0" x2="1" y1="0" y2=".25">
            <stop offset="0" stopColor="#0a7a1c" />
            <stop offset=".15" stopColor="#066018" />
            <stop offset=".35" stopColor="#034a10" />
            <stop offset=".5" stopColor="#056016" />
            <stop offset=".68" stopColor="#0c8a2c" />
            <stop offset=".76" stopColor="#30b458" />
            <stop offset=".83" stopColor="#087424" />
            <stop offset="1" stopColor="#06681c" />
          </linearGradient>
          <clipPath id="part">
            <path d={outline} />
          </clipPath>
        </defs>
        <path d="M337 357 354 347 548 380 565 390 479 439Z" fill="#ffe000" />
        <path d="M337 357 479 439V455L337 375Z" fill="#00461a" />
        <path d="M479 439 565 390V407L479 455Z" fill="#006a2a" />
        <path d={outline} fill="url(#body)" />
        <path d="M355 358Q355 363 360 366L450 418C468 428 492 427 508 418L540 400Q548 395 547 384" fill="none" stroke="#a87410" strokeWidth="4" />
        <g clipPath="url(#part)" fill="none">
          <path d="M401 264C380 280 366 303 357 337L356 358" stroke="#14902c" strokeWidth="5" opacity=".6" />
          {passes.map((t, i) => {
            const p = pass(t);
            return (
              <g key={i}>
                <path d={p.left} stroke="#94982c" strokeWidth="1" strokeDasharray={dashes(i * 31, 14, 3, 0.9)} opacity=".7" />
                <path d={p.right} stroke="#a8b434" strokeWidth="1" strokeDasharray={dashes(i * 53 + 7, 16, 3, 0.3)} opacity=".8" />
              </g>
            );
          })}
          <g stroke="#94780c" strokeWidth="2.500">
            <path d="M390 354 393 366 399 372 427 388V378L421 371" />
            <path d="M392 366 402 371 425 384" strokeWidth="3" />
            <path d="M396 358 400 364 417 373M407 347H413M406 353 415 358M384 356 381 363 372 362" strokeWidth="1.500" />
            <path d="M434 380Q438 394 450 403M508 406 514 392 524 385 535 386" strokeWidth="1.300" strokeDasharray="3 2" />
          </g>
          <path d="M509 405 515 394 527 389 534 396Z" fill="#044c10" />
        </g>
        <ellipse cx="450" cy="274" rx="46" ry="26.500" fill="#00bc32" stroke="#a8d040" />
        <path d="M542 331H561M551.500 321V341" stroke="#fff" strokeWidth="1.300" />
        <path d="M188 557H298" stroke="#d8d6c8" strokeWidth="2" />
      </svg>
    </main>
  );
}

function SideStrip() {
  const divider = <i className="my-[3px] ml-[3px] block h-px w-[26px] shrink-0 bg-[#a9a68f]" />;
  const column = (names: string[]) =>
    names.map((name) => (
      <div key={name} className="flex h-[17px] shrink-0 items-center pl-[4px]">
        <button aria-label={name}>
          <Icon name={name} className="block size-[14px]" />
        </button>
        {(name === "fillet" || name === "bool") && (
          <svg viewBox="0 0 6 3" className="ml-[5px] h-[3px] w-[5px]">
            <path d="M0 0H6L3 3Z" fill="#222" />
          </svg>
        )}
      </div>
    ));
  return (
    <nav className="flex w-[35px] shrink-0 flex-col overflow-hidden border-l border-white bg-[#edead9]">
      <div className="mr-[10px] mt-[3px] flex shrink-0 flex-col border-r border-t border-[#b9b69f] pt-[5px]">
        <i className="mb-[5px] ml-[3px] h-px w-[18px] bg-[#a9a68f]" />
        {column(["planes", "sphere", "open", "axes", "cubeOlive", "new", "savePurple", "saveAs", "surf", "mill"])}
      </div>
      <i className="mt-[5px] h-px shrink-0 bg-[#b9b69f]" />
      <i className="mb-[4px] ml-[3px] mt-[3px] h-px w-[28px] shrink-0 bg-[#a9a68f]" />
      {column(["extrude", "revolve", "sweep", "loft", "fillet"])}
      {divider}
      {column(["shell", "bool", "draft", "trimSolid", "block"])}
      {divider}
      {column(["openSolid", "grid3d", "arrowSolid"])}
    </nav>
  );
}

function PushButton({ icon, label, className, muted }: { icon: string; label: string; className: string; muted?: boolean }) {
  return (
    <button
      aria-label={label}
      className={clsx("flex items-center justify-center rounded-[3px] border", muted ? "border-[#cfccb8] bg-[#e6e3d0]" : "border-[#2c4464] bg-[#f5f4ee]", className)}
    >
      <Icon name={icon} className="size-[15px]" />
    </button>
  );
}

function Check({ label, checked }: { label: string; checked?: boolean }) {
  return (
    <label className="flex h-3 items-center gap-[2px]">
      <span className="relative size-[11px]">
        <input type="checkbox" defaultChecked={checked} className="peer block size-[11px] appearance-none border border-[#2c5480] bg-[#f6f6f2]" />
        <svg viewBox="0 0 10 10" className="pointer-events-none absolute inset-0 hidden size-[11px] peer-checked:block">
          <path d="M2.500 4.500 4.500 7 8 3" fill="none" stroke="#209020" strokeWidth="1.600" />
        </svg>
      </span>
      {label}
    </label>
  );
}

function Ticks() {
  return (
    <div className="flex w-[46px] justify-between">
      {[0, 1, 2, 3, 4].map((n) => (
        <i key={n} className="h-[2px] w-px bg-[#a9a68f]" />
      ))}
    </div>
  );
}

function VerifyDialog() {
  const group = "rounded-[3px] border border-[#d2cfbb]";
  const field = "h-[18px] w-[47px] border border-[#8098b0] bg-white pb-[2px] pl-[2px] font-[Roboto] text-[9px] leading-[12px] text-[#333] outline-none";
  return (
    <section role="dialog" aria-label="实体切削验证" className="absolute left-[82px] top-[37px] w-[172px] rounded-t-[6px] border-[3px] border-t-0 border-[#0831b4] bg-[#ece9d8] shadow-[1px_1px_0_#00106a]">
      <div className="-mx-[3px] flex h-[21px] items-center justify-between rounded-t-[6px] bg-gradient-to-b from-[#0840c8] via-[#0a58ec] to-[#0848dc] pl-[6px] pr-[4px]">
        <h2 className="text-[11px] font-bold text-white">实体切削验证</h2>
        <button aria-label="关闭" className="flex size-[16px] items-center justify-center rounded-[3px] border border-white bg-[#e04a28]">
          <svg viewBox="0 0 10 10" className="size-[10px]">
            <path d="M1 1 9 9M9 1 1 9" stroke="#fff" strokeWidth="1.800" />
          </svg>
        </button>
      </div>
      <div className="flex flex-col pb-[13px] pl-[8px] pr-[5px] pt-[9px]">
        <div className="ml-[5px] mr-[8px] flex h-[21px] items-center justify-between">
          <PushButton icon="rewind" label="重新开始" className="size-[22px]" />
          {["play", "stop", "step", "forward"].map((name) => (
            <button key={name} aria-label={name} className="flex size-[22px] items-center justify-center">
              <Icon name={name} />
            </button>
          ))}
        </div>
        <div className="ml-[34px] mt-[9px] flex gap-[5px]">
          {["target", "stockBar", "funnel"].map((name) => (
            <button key={name} aria-label={name} className="flex size-[24px] items-center justify-center rounded-[2px] border border-[#38506c] bg-[#eeecdf]">
              <Icon name={name} className="size-[22px]" />
            </button>
          ))}
        </div>

        <fieldset className={clsx("mt-[5px] h-[115px] px-[3px]", group)}>
          <legend className="ml-[3px] px-px leading-[12px] text-[#1c4cb0]">显示控制</legend>
          <div className="flex flex-col gap-[3px] pl-[14px] pr-[6px] pt-[2px]">
            <label className="flex items-center justify-between">
              每次手动时的位
              <input className={field} defaultValue="1" />
            </label>
            <label className="flex items-center justify-between">
              每次重绘时的位移
              <input className={field} defaultValue="100000" />
            </label>
          </div>
          <div className="mt-[7px] flex h-[30px] items-center justify-between pl-[6px] pr-[20px] text-[#b4b19c]">
            <span>速度</span>
            <div className="flex flex-col items-center">
              <Ticks />
              <input
                type="range"
                aria-label="速度 / 品质"
                disabled
                className="my-[2px] h-[17px] w-[50px] appearance-none bg-[linear-gradient(#b9b69f,#b9b69f)] bg-[length:100%_1px] bg-center bg-no-repeat [&::-webkit-slider-thumb]:h-[16px] [&::-webkit-slider-thumb]:w-[8px] [&::-webkit-slider-thumb]:appearance-none [&::-webkit-slider-thumb]:rounded-[2px] [&::-webkit-slider-thumb]:border [&::-webkit-slider-thumb]:border-[#b9b69f] [&::-webkit-slider-thumb]:bg-[#f4f2e8]"
              />
              <Ticks />
            </div>
            <span>品质</span>
          </div>
          <div className="mt-[6px]">
            <Check label="每个刀具路径后更新" checked />
          </div>
        </fieldset>

        <fieldset className={clsx("mt-[7px] h-[77px] px-[3px]", group)}>
          <legend className="ml-[3px] px-px leading-[12px] text-[#1c4cb0]">停止选项</legend>
          <div className="flex flex-col gap-[6px] pt-[6px]">
            <Check label="撞刀停止" />
            <Check label="换刀停止" />
            <Check label="完成每个操作后停止" />
          </div>
        </fieldset>

        <div className="ml-[4px] mt-[6px]">
          <Check label="详细模式" />
        </div>

        <div className="ml-[5px] mr-[8px] mt-[8px] flex justify-between">
          <PushButton icon="camera" label="配置" className="size-[22px]" muted />
          <PushButton icon="caliper" label="测量" className="size-[22px]" />
          <PushButton icon="chart" label="统计" className="size-[22px]" />
          <PushButton icon="noZoom" label="剖切" className="size-[22px]" />
          <PushButton icon="floppy" label="保存" className="size-[22px]" />
        </div>
        <div className="ml-[5px] mr-[8px] mt-[13px] flex items-center justify-between">
          <PushButton icon="walk" label="慢速" className="size-[22px]" />
          <input
            type="range"
            aria-label="验证速度"
            defaultValue="100"
            className="h-[18px] w-[60px] appearance-none bg-[linear-gradient(#b9b69f,#b9b69f)] bg-[length:100%_2px] bg-center bg-no-repeat [&::-webkit-slider-thumb]:h-[17px] [&::-webkit-slider-thumb]:w-[8px] [&::-webkit-slider-thumb]:appearance-none [&::-webkit-slider-thumb]:rounded-[2px] [&::-webkit-slider-thumb]:border-2 [&::-webkit-slider-thumb]:border-[#74b08c] [&::-webkit-slider-thumb]:bg-[#f4f6f0]"
          />
          <PushButton icon="run" label="快速" className="size-[22px]" />
        </div>

        <dl className={clsx("mt-[9px] grid h-[51px] grid-cols-[50px_1fr] whitespace-nowrap pl-[6px] pt-[2px] leading-[15px]", group)}>
          <dt>刀具路径:</dt>
          <dd>曲面精加工等高外形</dd>
          <dt>刀具编号:</dt>
          <dd className="font-[Roboto]">244</dd>
          <dt>刀具名称:</dt>
          <dd className="pl-[4px] font-[Roboto]">10. BALL ENDMILL</dd>
        </dl>

        <output className="mx-auto mt-[6px] flex h-[18px] w-[29px] items-center justify-center border border-[#b9b69f] font-[Roboto] text-[#a9a68f]">100%</output>
        <div className="ml-[8px] mt-[6px] flex gap-[6px]">
          <PushButton icon="ok" label="确定" className="h-[21px] w-[41px]" />
          <PushButton icon="cancel" label="取消" className="h-[21px] w-[41px]" />
          <PushButton icon="question" label="帮助" className="h-[21px] w-[41px]" />
        </div>
      </div>
    </section>
  );
}

function StatusBar() {
  const button = "h-[16px] shrink-0 rounded-[2px] border border-[#d0cdb9] bg-[#f0eee0]";
  return (
    <div className="flex h-[20px] shrink-0 items-center overflow-hidden border-t-2 border-[#b9b69f] bg-[#edead9] pl-[105px]">
      <button className={clsx(button, "w-[21px]")}>3D</button>
      <button className={clsx(button, "ml-[3px] w-[42px]")}>屏幕视角</button>
      <button className={clsx(button, "ml-[2px] w-[33px]")}>构图面</button>
      <span className="ml-[10px] w-[5px]">Z</span>
      <Combo label="Z 深度" value="0.0" className="w-[87px]" />
      <button aria-label="颜色" className="ml-[4px] h-[14px] w-[43px] bg-[#00f418] text-[#1c6c1c]">10</button>
      <svg viewBox="0 0 8 5" className="ml-[3px] h-[5px] w-[8px]">
        <path d="M0 0H8L4 5Z" fill="#222" />
      </svg>
      <span className="ml-[9px] w-[20px] text-[10px]">层别</span>
      <Combo label="层别" value="1" className="min-w-[60px] flex-1" />
      <button className={clsx(button, "ml-[5px] w-[30px]")}>属性</button>
      <Combo label="点型" value="＊" className="ml-[4px] w-[27px]" />
      <Combo label="线型" value=" " line="h-[2px] bg-black" className="ml-[3px] w-[50px]" />
      <Combo label="线宽" value=" " line="h-px bg-black" className="ml-[3px] w-[50px]" />
      <button className={clsx(button, "ml-[3px] w-[36px]")}>WCS</button>
      <button className={clsx(button, "ml-[6px] w-[38px]")}>群组</button>
      <button className={clsx(button, "ml-[4px] w-[17px]")}>!</button>
      <button className={clsx(button, "ml-[3px] w-[16px]")}>?</button>
    </div>
  );
}

const tasks = [
  { icon: "folder", text: "章节" },
  { icon: "word", text: "第13..." },
  { icon: "xlogoWhite", text: "Mast...", active: true },
  { icon: "folder", text: "第十..." },
  { icon: "folder", text: "第十..." },
  { icon: "camtasia", text: "Camt..." },
];

function Taskbar() {
  return (
    <footer className="flex h-[22px] shrink-0 items-center border-t border-[#5c94f4] bg-gradient-to-b from-[#2c6ef0] via-[#1c58e0] to-[#1a4cd0] text-white">
      <button className="flex h-full w-[75px] shrink-0 items-center gap-[7px] rounded-r-[6px] bg-gradient-to-b from-[#48a848] via-[#309030] to-[#2c8430] pl-[7px] text-[14px] italic">
        <svg viewBox="0 0 16 16" className="size-[15px]" aria-hidden="true">
          <path d="M1 3Q4 1 7 3L6 7Q3 6 0 8Z" fill="#f05020" />
          <path d="M8 3Q11 5 15 3L14 8Q10 9 7 7Z" fill="#80c828" />
          <path d="M0 9Q3 7 6 8L5 13Q2 12-1 13Z" fill="#4088f0" />
          <path d="M7 8Q10 10 14 9L12 14Q9 15 6 13Z" fill="#fccc20" />
        </svg>
        开始
      </button>
      <div className="flex w-[197px] shrink-0 items-center gap-[4px] pl-[8px]">
        <Icon name="ieDark" />
        <Icon name="solidworks" />
        <Icon name="ie" />
      </div>
      <div className="flex min-w-0 flex-1 gap-[2px] pr-[8px]">
        {tasks.map((task, i) => (
          <button
            key={i}
            className={clsx(
              "flex h-[19px] min-w-0 flex-1 items-center gap-[4px] overflow-hidden whitespace-nowrap rounded-[2px] pl-[7px]",
              task.active ? "bg-[#1444ac]" : "bg-[#3a80f4]",
            )}
          >
            <Icon name={task.icon} className="size-[12px]" />
            {task.text}
          </button>
        ))}
      </div>
      <Icon name="palette" className="mr-[9px] size-[13px]" />
      <div className="flex h-full w-[95px] shrink-0 items-center border-l border-[#0c4c9c] bg-gradient-to-b from-[#28a4f4] to-[#1488e0]">
        <Icon name="chevronLeft" className="mr-[2px] size-[13px]" />
        <Icon name="camtasia" className="size-[13px]" />
        <Icon name="trayRed" className="size-[13px]" />
        <Icon name="monitors" className="size-[13px]" />
        <time className="ml-[5px]">11:43</time>
      </div>
    </footer>
  );
}

export default function App() {
  return (
    <div className="relative flex h-screen min-h-[560px] flex-col overflow-hidden bg-[#edead9] font-['Liberation_Mono','Noto_Sans_CJK_SC',monospace] text-[9px] leading-[12px] text-black">
      <TitleBar />
      <nav className="flex h-4 shrink-0 items-center whitespace-nowrap pl-[4px] text-[#a29f8a]">
        {menus.map(([label, width]) => (
          <button key={label} className={clsx("shrink-0 text-left", width)}>
            {label}
          </button>
        ))}
      </nav>
      <Toolbar
        left="new open save print"
        right="zoomRed | zoomWin zoomOut | flash1 flash2 flash3 ][ cubeTop cubeFront cubeRight cubeWire ][ cubeRed v ][ globe v sphere v ][ crayon crayons v | eraser v ][ lineQ network | hsplit orange sigma greenBox v"
      />
      <Toolbar
        shift
        left="plus v line v circleRed"
        right="v ][ xf1 xf2 xf3 xf4 xf5 | xf6 v xf7 xf8 v ][ bulb v dimension ][ grid bars sail clip redMesh v | dome v hatch v tool v ][ gPlus gLines gCircle gReturn gDot"
      />
      <SelectionBar />
      <div className="flex h-[22px] shrink-0 items-center justify-between bg-[#ffffc4] pl-[1px] pr-[44px]">
        <div className="flex h-full items-center gap-[3px] border-r border-[#c9c68f] pr-[3px]">
          <button aria-label="实体" className="flex size-[17px] items-center justify-center rounded-[2px] border border-[#2c4464] bg-[#e4e2d4]">
            <Icon name="solidBox" />
          </button>
        </div>
        <button aria-label="帮助" className="flex size-[17px] items-center justify-center rounded-[3px] border border-[#2c4464] bg-[#f3f4f2]">
          <Icon name="question" />
        </button>
      </div>
      <div className="flex min-h-0 flex-1">
        <OperationsPanel />
        <Viewport />
        <SideStrip />
      </div>
      <StatusBar />
      <Taskbar />
      <VerifyDialog />
    </div>
  );
}
